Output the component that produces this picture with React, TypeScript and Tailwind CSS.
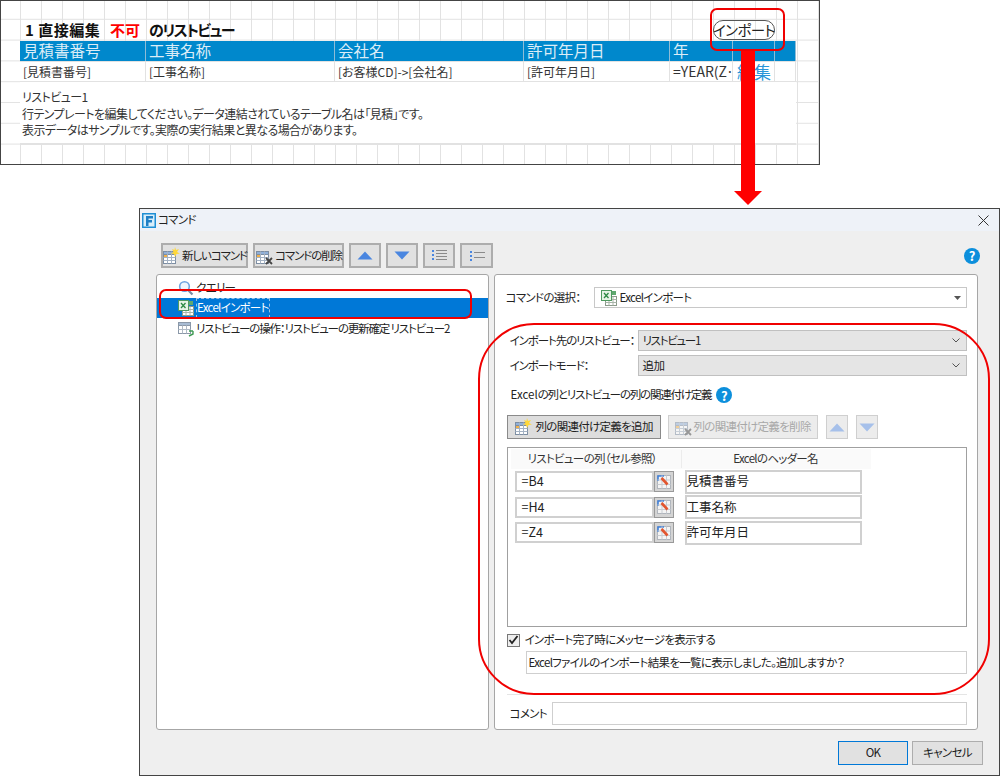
function Tri({ dir, color = '#4a86e0' }: { dir: 'up' | 'down'; color?: string }) {
    return (
        <svg width="16" height="9" viewBox="0 0 16 9">
            <path d={dir === 'up' ? 'M8 0.5 L15.5 8.5 L0.5 8.5 Z' : 'M0.5 0.5 L15.5 0.5 L8 8.5 Z'} fill={color} />
        </svg>
    )
}

function GridIcon({ badge, size = 18 }: { badge: 'star' | 'x'; size?: number }) {
    return (
        <svg className="shrink-0" width={size} height={size} viewBox="0 0 18 18">
            <rect x="1.5" y="4.5" width="12" height="12" fill="#fff" stroke="#7d8ea3" />
            <rect x="1.5" y="4.5" width="12" height="3" fill="#8fb0da" stroke="#7d8ea3" />
            <path d="M5.5 4.5V16.5M9.5 4.5V16.5M1.5 10.5H13.5M1.5 13.5H13.5" stroke="#a5b3c4" />
            <rect x="2" y="8" width="3" height="2" fill="#f2b14a" />
            {badge === 'star' ? (
                <path d="M13 0 L14 3 L17 2 L15 5 L18 6.5 L14.5 7 L13 10 L12 7 L9 6.5 L11.5 5 L10 2 L12.5 3 Z" fill="#ffd83a" />
            ) : (
                <path d="M11 11 L17 17 M17 11 L11 17" stroke="#444" strokeWidth="1.8" />
            )}
        </svg>
    )
}

function ExcelIcon() {
    return (
        <svg className="shrink-0" width="16" height="16" viewBox="0 0 16 16">
            <rect x="4.5" y="6.5" width="11" height="9" fill="#fff" stroke="#8a9a8a" />
            <path d="M8 6.5V15.5M12 6.5V15.5M4.5 9.5H15.5M4.5 12.5H15.5" stroke="#a9b5a9" />
            <rect x="0.5" y="0.5" width="10" height="10" fill="#e6f3e6" stroke="#4f9a60" />
            <path d="M3 3 L7.5 8 M7.5 3 L3 8" stroke="#2d8a44" strokeWidth="1.3" />
            <rect x="11" y="1" width="4" height="4" fill="#5fa86f" />
        </svg>
    )
}

function SearchIcon() {
    return (
        <svg className="shrink-0" width="16" height="16" viewBox="0 0 16 16" fill="none">
            <circle cx="6.5" cy="6.5" r="4.8" stroke="#6fa3e0" strokeWidth="1.6" fill="#eef5fd" />
            <path d="M10 10 L14.5 14.5" stroke="#7d8da3" strokeWidth="2.2" />
        </svg>
    )
}

function ListIcon() {
    return (
        <svg className="shrink-0" width="16" height="16" viewBox="0 0 16 16">
            <rect x="0.5" y="1.5" width="12" height="11" fill="#fff" stroke="#8b98a8" />
            <rect x="0.5" y="1.5" width="12" height="3" fill="#a8bcd4" stroke="#8b98a8" />
            <path d="M4.5 4.5V12.5M8.5 4.5V12.5M0.5 8.5H12.5" stroke="#b0bac6" />
            <path d="M11 10 H15 M15 10 L15 13 L11 15" stroke="#3f9a54" strokeWidth="1.4" fill="none" />
        </svg>
    )
}

function CellRefIcon() {
    return (
        <svg width="16" height="16" viewBox="0 0 16 16">
            <rect x="1.5" y="1.5" width="13" height="13" fill="#f4f4f4" stroke="#b0b5bc" />
            <path d="M1.5 2 H8 M2 1.5 V7" stroke="#3f7fd8" strokeWidth="1.6" />
            <path d="M6 1.5V14.5M10.5 1.5V14.5M1.5 6H14.5M1.5 10.5H14.5" stroke="#c8ccd2" />
            <path d="M5.5 4 L11.5 10.5" stroke="#e2552f" strokeWidth="2.6" />
        </svg>
    )
}

function HelpIcon() {
    return (
        <span className="flex h-4 w-4 shrink-0 items-center justify-center rounded-full bg-[#0c8fdc] text-[13px] font-bold leading-none tracking-normal text-white">?</span>
    )
}

function Chevron() {
    return (
        <svg width="8" height="5" viewBox="0 0 8 5" fill="none">
            <path d="M0.5 0.5 L4 4 L7.5 0.5" stroke="#555" />
        </svg>
    )
}

function ToolBtn({ w, children }: { w: string; children: React.ReactNode }) {
    return (
        <div className={`flex h-[25px] shrink-0 items-center justify-center whitespace-nowrap border-2 border-[#adadad] bg-[#e1e1e1] tracking-[-1.1px] text-[#222] ${w}`}>
            {children}
        </div>
    )
}

function Row({ cell, name }: { cell: string; name: string }) {
    return (
        <div className="flex h-[25.5px] items-center text-[12.5px] tracking-normal">
            <div className="ml-[7px] flex h-[21px] w-[139px] items-center border-2 border-[#d0d0d0] bg-white pl-[5px]">{cell}</div>
            <div className="flex h-[21px] w-[20px] items-center justify-center border border-[#999] bg-[#d4d4d4]">
                <CellRefIcon />
            </div>
            <div className="ml-[11px] flex h-[24px] w-[177px] items-center border-2 border-[#d0d0d0] bg-white">{name}</div>
        </div>
    )
}

export default function App() {
    const cols = [
        { w: 'w-[126px]', head: '見積書番号', val: '[見積書番号]' },
        { w: 'w-[189px]', head: '工事名称', val: '[工事名称]' },
        { w: 'w-[189px]', head: '会社名', val: '[お客様CD]->[会社名]' },
        { w: 'w-[146px]', head: '許可年月日', val: '[許可年月日]' },
        { w: 'w-[63px]', head: '年', val: '=YEAR(Z·' },
        { w: 'w-[42px]', head: '', val: '' },
        { w: 'w-[21px]', head: '', val: '' },
    ]

    return (
        <div className="relative h-[776px] w-[1000px] overflow-hidden bg-white font-['Noto_Sans_CJK_JP','Noto_Sans',sans-serif] text-[#222] [font-feature-settings:'palt']">
            {/* list view sheet */}
            <div className="absolute left-0 top-0 h-[165px] w-[820px] border border-[#444] bg-white bg-[linear-gradient(to_right,#e2e2e2_1px,transparent_1px),linear-gradient(to_bottom,#e2e2e2_1px,transparent_1px)] bg-[size:21px_20.8px] bg-[position:19px_-3px] pl-[19px] pt-[19px]">
                <div className="flex h-[21px] items-center pl-[5px] text-[15px] font-bold text-[#111]">
                    <span className="w-[85px] whitespace-nowrap tracking-[0.5px]">1 直接編集</span>
                    <span className="w-[39px] text-[#ff0000]">不可</span>
                    <span className="tracking-[-1.5px]">のリストビュー</span>
                </div>
                <div className="flex h-[20px] w-[776px] bg-[#0088cc]">
                    {cols.map((c) => (
                        <div key={c.val} className={`${c.w} flex items-center border-r border-[#8fbcd6] pl-[3px] text-[15.5px] text-[#dcedf7]`}>{c.head}</div>
                    ))}
                </div>
                <div className="flex h-[21px] w-[776px] border-y border-[#e2e2e2] bg-white">
                    {cols.map((c) => (
                        <div key={c.val + c.w} className={`${c.w} flex items-center overflow-hidden whitespace-nowrap border-r border-[#e2e2e2] pl-[3px] ${c.head === '年' ? 'text-[14px]' : 'text-[12px]'} text-[#333]`}>{c.val}</div>
                    ))}
                </div>
                <div className="flex h-[63px] w-[776px] flex-col justify-center border-b-2 border-[#e2e2e2] bg-white pl-[2px] pt-[3px] text-[12px] leading-[16.5px] tracking-[-0.55px] text-[#333]">
                    <div>リストビュー1</div>
                    <div>行テンプレートを編集してください。データ連結されているテーブル名は「見積」です。</div>
                    <div>表示データはサンプルです。実際の実行結果と異なる場合があります。</div>
                </div>
            </div>
            <div className="absolute left-[713px] top-[20px] flex h-[20px] w-[62px] items-center justify-center whitespace-nowrap rounded-full border border-[#555] text-[14.5px] tracking-[-0.6px] text-[#222]">インポート</div>
            <div className="absolute left-[737px] top-[59px] text-[17px] text-[#2a95d8]">編集</div>

            {/* command dialog */}
            <div className="absolute left-[139px] top-[208px] flex h-[568px] w-[861px] flex-col border border-[#444] bg-[#efefef] text-[11.5px] tracking-[-0.7px]">
                <div className="flex h-[22px] shrink-0 items-center bg-[#eef2f8] pl-[2px]">
                    <svg width="14" height="15" viewBox="0 0 14 15">
                        <rect width="14" height="15" fill="#1e8fd5" />
                        <rect x="1.5" y="1.5" width="11" height="12" fill="#d8eefa" />
                        <path d="M4 3 H11 V5.5 H6.5 V7 H10 V9.5 H6.5 V13 H4 Z" fill="#1e7fc5" />
                    </svg>
                    <span className="ml-[2px]">コマンド</span>
                    <svg className="ml-auto mr-[10px]" width="11" height="11" viewBox="0 0 11 11" fill="none">
                        <path d="M0.5 0.5 L10.5 10.5 M10.5 0.5 L0.5 10.5" stroke="#333" />
                    </svg>
                </div>

                <div className="flex flex-1 flex-col pl-[16px] pr-[21px]">
                    <div className="ml-[5px] mt-[12px] flex items-center gap-[5px]">
                        <ToolBtn w="w-[87px] gap-[2px]"><GridIcon badge="star" /><span>新しいコマンド</span></ToolBtn>
                        <ToolBtn w="w-[91px] gap-[2px]"><GridIcon badge="x" /><span>コマンドの削除</span></ToolBtn>
                        <ToolBtn w="w-[32px]"><Tri dir="up" /></ToolBtn>
                        <ToolBtn w="w-[32px]"><Tri dir="down" /></ToolBtn>
                        <ToolBtn w="w-[32px]">
                            <svg width="16" height="13" viewBox="0 0 16 13"><path d="M5 1.5H16M5 4.5H16M5 7.5H16M5 10.5H16" stroke="#8a8a8a" /><path d="M1 2H3M1 6H3M1 10H3" stroke="#4a86e0" strokeWidth="2" /></svg>
                        </ToolBtn>
                        <ToolBtn w="w-[33px]">
                            <svg width="16" height="11" viewBox="0 0 16 11"><path d="M5 2.5H16M5 7.5H16" stroke="#8a8a8a" /><path d="M1 2H3M1 6H3M1 10H3" stroke="#4a86e0" strokeWidth="2" /></svg>
                        </ToolBtn>
                        <div className="ml-auto mr-[-2px]"><HelpIcon /></div>
                    </div>

                    <div className="mt-[6px] flex h-[456px] gap-[5px]">
                        {/* command tree */}
                        <div className="w-[333px] whitespace-nowrap rounded-[3px] border border-[#a6a6a6] bg-white pt-[3px]">
                            <div className="flex h-[20px] items-center pl-[21px]"><SearchIcon /><span className="ml-[2px]">クエリー</span></div>
                            <div className="flex h-[20px] items-center bg-[#0078d7] pl-[21px] text-white"><ExcelIcon /><span className="ml-[2px] border border-dashed border-[#9cc4e8]">Excelインポート</span></div>
                            <div className="mt-[1px] flex h-[20px] items-center pl-[21px]"><ListIcon /><span className="ml-[2px] tracking-[-1.15px]">リストビューの操作：リストビューの更新確定 リストビュー2</span></div>
                        </div>

                        {/* command settings */}
                        <div className="flex w-[485px] flex-col whitespace-nowrap rounded-[3px] border border-[#a6a6a6] bg-white pl-[12px] pr-[10px]">
                            <div className="mt-[12px] flex h-[21px] items-center">
                                <span className="-ml-[1px] w-[88px]">コマンドの選択：</span>
                                <div className="flex h-[21px] flex-1 items-center border border-[#c8c8c8] bg-white pl-[6px] pr-[5px]">
                                    <ExcelIcon /><span className="ml-[3px]">Excelインポート</span>
                                    <svg className="ml-auto" width="7" height="4" viewBox="0 0 7 4"><path d="M0 0H7L3.5 4Z" fill="#555" /></svg>
                                </div>
                            </div>

                            <div className="mt-[22px] flex h-[21px] items-center">
                                <span className="w-[131px] pl-[3px] tracking-[-1.1px]">インポート先のリストビュー：</span>
                                <div className="flex h-[21px] flex-1 items-center justify-between border border-[#c0c0c0] bg-[#e5e5e5] pl-[4px] pr-[6px]"><span className="tracking-[-1.3px]">リストビュー1</span><Chevron /></div>
                            </div>
                            <div className="mt-[4px] flex h-[21px] items-center">
                                <span className="w-[131px] pl-[3px] tracking-[-1.1px]">インポートモード：</span>
                                <div className="flex h-[21px] flex-1 items-center justify-between border border-[#c0c0c0] bg-[#e5e5e5] pl-[4px] pr-[6px]">追加<Chevron /></div>
                            </div>

                            <div className="mt-[9px] flex h-[20px] items-center gap-[5px] pl-[4px]">
                                <span className="tracking-[-1.2px]"><span className="tracking-normal">Excel</span>の列とリストビューの列の関連付け定義</span>
                                <HelpIcon />
                            </div>

                            <div className="mt-[10px] flex items-center">
                                <div className="flex h-[24px] w-[154px] items-center justify-center gap-[3px] border border-[#8a8a8a] bg-[#dddddd]"><GridIcon badge="star" /><span>列の関連付け定義を追加</span></div>
                                <div className="ml-[7px] flex h-[24px] w-[150px] items-center justify-center gap-[1px] border border-[#cfcfcf] bg-[#ececec] text-[#a8a8a8]"><span className="opacity-50"><GridIcon badge="x" /></span><span>列の関連付け定義を削除</span></div>
                                <div className="ml-[8px] flex h-[24px] w-[22px] items-center justify-center border border-[#cfcfcf] bg-[#ececec]"><Tri dir="up" color="#a6c0ea" /></div>
                                <div className="ml-[8px] flex h-[24px] w-[22px] items-center justify-center border border-[#cfcfcf] bg-[#ececec]"><Tri dir="down" color="#a6c0ea" /></div>
                            </div>

                            <div className="mt-[8px] h-[180px] border border-[#a0a0a0] bg-white pt-[1px]">
                                <div className="ml-[3px] flex h-[20px] w-[360px] items-center bg-[#fafafa] text-[#333]">
                                    <div className="w-[170px] pl-[17px]">リストビューの列（セル参照）</div>
                                    <div className="w-[189px] border-l border-[#ececec] text-center">Excelのヘッダー名</div>
                                </div>
                                <Row cell="=B4" name="見積書番号" />
                                <Row cell="=H4" name="工事名称" />
                                <Row cell="=Z4" name="許可年月日" />
                            </div>

                            <div className="mt-[6px] flex h-[14px] items-center">
                                <div className="flex h-[13px] w-[13px] items-center justify-center border border-[#777] bg-[#eee]">
                                    <svg width="11" height="10" viewBox="0 0 11 10" fill="none"><path d="M1.5 5 L4 8 L9.5 1" stroke="#222" strokeWidth="1.8" /></svg>
                                </div>
                                <span className="ml-[5px]">インポート完了時にメッセージを表示する</span>
                            </div>
                            <div className="ml-[19px] mt-[4px] flex h-[23px] items-center border border-[#cfcfcf] bg-white pl-[2px]">Excelファイルのインポート結果を一覧に表示しました。追加しますか？</div>

                            <div className="mt-[20px] h-[1px] bg-[#e5e5e5]" />

                            <div className="mt-[7px] flex items-center">
                                <span className="w-[45px] pl-[3px]">コメント</span>
                                <div className="h-[23px] flex-1 border border-[#cfcfcf] bg-white" />
                            </div>
                        </div>
                    </div>

                    <div className="mr-[-5px] mt-[11px] flex justify-end gap-[4px]">
                        <div className="flex h-[24px] w-[70px] items-center justify-center border border-[#0078d7] bg-[#e1e1e1]">OK</div>
                        <div className="flex h-[24px] w-[71px] items-center justify-center border border-[#adadad] bg-[#e1e1e1]">キャンセル</div>
                    </div>
                </div>
            </div>

            {/* red annotations */}
            <div className="absolute left-[710px] top-[8px] h-[43px] w-[75px] rounded-[7px] border-2 border-[#f00000]" />
            <div className="absolute left-[741px] top-[51px] h-[140px] w-[14px] bg-[#ff0000]" />
            <div className="absolute left-[734px] top-[191px] h-0 w-0 border-x-[14px] border-t-[14px] border-x-transparent border-t-[#ff0000]" />
            <div className="absolute left-[159px] top-[289px] h-[30px] w-[313px] rounded-[7px] border-2 border-[#f00000]" />
            <div className="absolute left-[478px] top-[323px] h-[372px] w-[512px] rounded-[56px] border-2 border-[#f00000]" />
        </div>
    )
}
